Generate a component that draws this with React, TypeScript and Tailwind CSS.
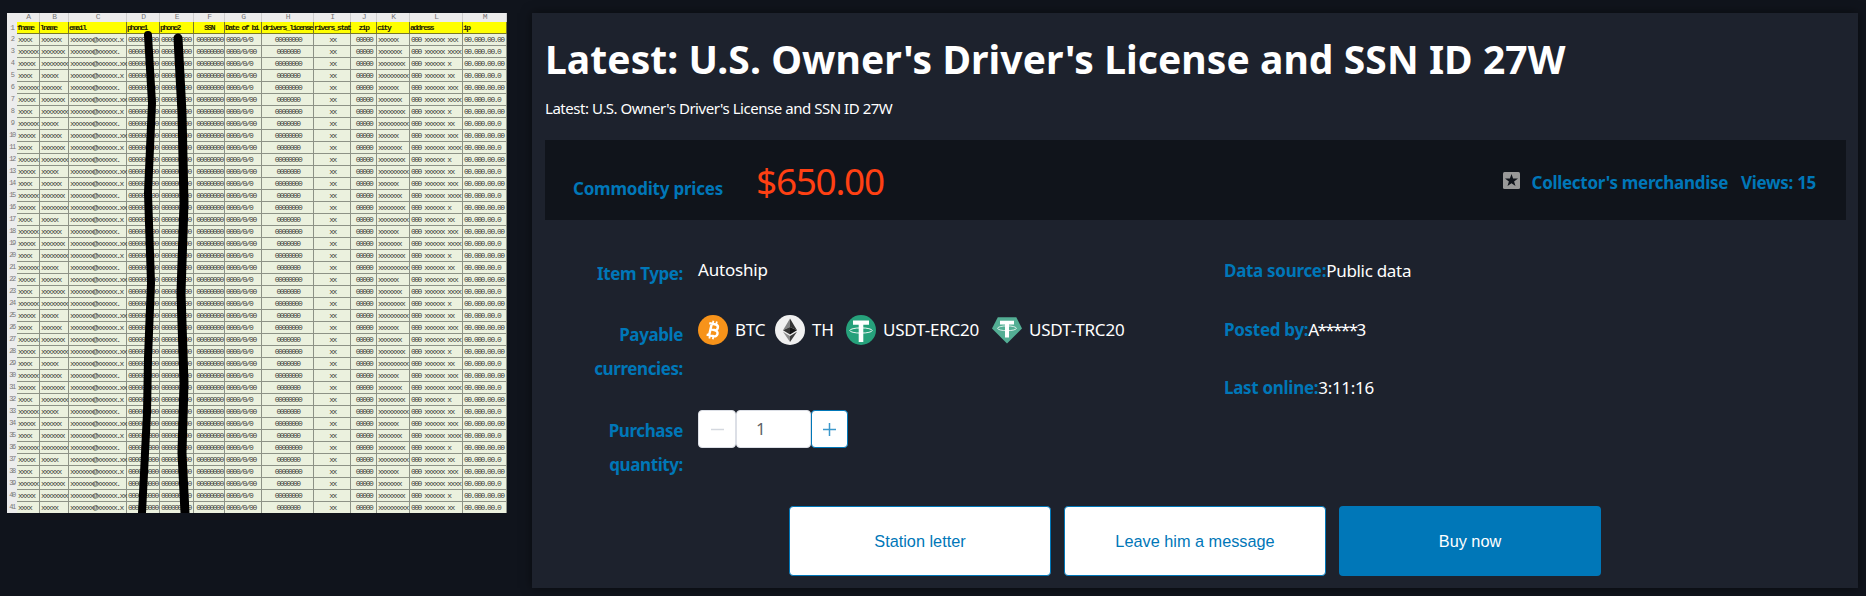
import type { ReactNode } from "react";

const columns = [
  { letter: "A", name: "fname", mask: "xxxxxx", vary: 3, width: "w-[23px]", align: "text-left" },
  { letter: "B", name: "lname", mask: "xxxxxxxx", vary: 4, width: "w-[29px]", align: "text-left" },
  { letter: "C", name: "email", mask: "xxxxxxx@xxxxxx.xx", vary: 3, width: "w-[58px]", align: "text-left" },
  { letter: "D", name: "phone1", mask: "000000000", vary: 1, width: "w-[33px]", align: "text-left" },
  { letter: "E", name: "phone2", mask: "000000000", vary: 1, width: "w-[34px]", align: "text-left" },
  { letter: "F", name: "SSN", mask: "00000000", vary: 1, width: "w-[31px]", align: "text-center" },
  { letter: "G", name: "Date of bi", mask: "0000/0/00", vary: 2, width: "w-[37px]", align: "text-left" },
  { letter: "H", name: "drivers_license", mask: "00000000", vary: 2, width: "w-[52px]", align: "text-center" },
  { letter: "I", name: "rivers_stat", mask: "xx", vary: 1, width: "w-[37px]", align: "text-center" },
  { letter: "J", name: "zip", mask: "00000", vary: 1, width: "w-[26px]", align: "text-center" },
  { letter: "K", name: "city", mask: "xxxxxxxxx", vary: 4, width: "w-[33px]", align: "text-left" },
  { letter: "L", name: "address", mask: "000 xxxxxx xxxx", vary: 4, width: "w-[53px]", align: "text-left" },
  { letter: "M", name: "ip", mask: "00.000.00.00", vary: 2, width: "w-[44px]", align: "text-left" },
];

const rows = Array.from({ length: 40 }, (_, i) => i + 2);

const maskFor = (mask: string, vary: number, row: number) =>
  mask.slice(0, mask.length - ((row * 7 + mask.length) % vary));

const SheetPreview = () => (
  <div className="relative h-[500px] w-[500px] shrink-0 overflow-hidden bg-[#ebf1de] font-['Liberation_Mono',monospace] text-[8px] tracking-[-1.5px] text-[#3f433b]">
    <div className="flex h-[9px] bg-[#ececec] leading-[7px] text-[#777]">
      <span className="w-[10px]" />
      {columns.map((col) => (
        <span key={col.letter} className={`${col.width} shrink-0 border-r border-[#cfcfcf] text-center`}>
          {col.letter}
        </span>
      ))}
    </div>
    <div className="flex h-[12px] bg-[#ffff00] leading-[12px] text-[#222200]">
      <span className="w-[10px] bg-[#ececec] text-center text-[#777]">1</span>
      {columns.map((col) => (
        <span
          key={col.letter}
          className={`${col.width} ${col.align} shrink-0 border-r border-b border-[#77772a] font-bold whitespace-nowrap`}
        >
          {col.name}
        </span>
      ))}
    </div>
    {rows.map((row) => (
      <div key={row} className="flex h-[12px] leading-[11px]">
        <span className="w-[10px] bg-[#ececec] text-center text-[7px] text-[#777]">{row}</span>
        {columns.map((col) => (
          <span
            key={col.letter}
            className={`${col.width} ${col.align} shrink-0 border-r border-b border-[#8d9286] pl-px whitespace-nowrap`}
          >
            {maskFor(col.mask, col.vary, row)}
          </span>
        ))}
      </div>
    ))}
    <svg className="absolute inset-0" width="500" height="500" viewBox="0 0 500 500" fill="none" stroke="#000" strokeLinecap="round">
      <path d="M141 22L145 90L141 180L144 270L141 345L140 400L135 500" strokeWidth="8" />
      <path d="M171 25L175 100L177 190L174 280L177 370L175 440L178 500" strokeWidth="9" />
    </svg>
  </div>
);

const BtcIcon = () => (
  <svg width="30" height="30" viewBox="0 0 32 32">
    <circle cx="16" cy="16" r="16" fill="#f7931a" />
    <g transform="rotate(13 16 16)" fill="none" stroke="#fff" strokeWidth="2.6">
      <path d="M10.5 9.7H17.5a3 3 0 0 1 0 6H13M13 15.7h5.3a3.3 3.3 0 0 1 0 6.6H10.5M13.2 9.7v12.6" />
      <path d="M14.2 6.3v3.4M18 6.3v3.4M14.2 22.3v3.4M18 22.3v3.4" strokeWidth="1.9" />
    </g>
  </svg>
);

const EthIcon = () => (
  <svg width="30" height="30" viewBox="0 0 30 30">
    <circle cx="15" cy="15" r="15" fill="#f0f0f0" />
    <path d="M15 3.5L8 15.2L15 12z" fill="#828384" />
    <path d="M15 3.5L22 15.2L15 12z" fill="#343434" />
    <path d="M15 12L8 15.2L15 19.4z" fill="#343434" />
    <path d="M15 12L22 15.2L15 19.4z" fill="#131313" />
    <path d="M8 16.8L15 21v6z" fill="#8c8c8c" />
    <path d="M22 16.8L15 21v6z" fill="#3c3c3b" />
  </svg>
);

const UsdtErcIcon = () => (
  <svg width="30" height="30" viewBox="0 0 30 30">
    <circle cx="15" cy="15" r="15" fill="#26a17b" />
    <path d="M7 5.5H23V9.8H17.3V27H12.7V9.8H7z" fill="#fff" />
    <ellipse cx="15" cy="15.5" rx="11.2" ry="2.6" fill="none" stroke="#fff" strokeWidth="0.9" />
  </svg>
);

const UsdtTrcIcon = () => (
  <svg width="30" height="30" viewBox="0 0 30 30">
    <path d="M5.8 2.3H24.3L30 13.5L15 28.5L0 13.5z" fill="#53ae94" />
    <path d="M8 5.8H22V9.6H17V22.5H13V9.6H8z" fill="#fff" />
    <ellipse cx="15" cy="13.3" rx="9.4" ry="2.4" fill="none" stroke="#fff" strokeWidth="0.8" />
  </svg>
);

const currencies = [
  { label: "BTC", icon: <BtcIcon />, width: "w-[77px]" },
  { label: "TH", icon: <EthIcon />, width: "w-[71px]" },
  { label: "USDT-ERC20", icon: <UsdtErcIcon />, width: "w-[146px]" },
  { label: "USDT-TRC20", icon: <UsdtTrcIcon />, width: "w-[146px]" },
];

const details = [
  { label: "Data source:", value: "Public data", tracking: "tracking-[-0.3px]" },
  { label: "Posted by:", value: "A*****3", tracking: "tracking-[-1.6px]" },
  { label: "Last online:", value: "3:11:16", tracking: "tracking-[-0.3px]" },
];

const Label = ({ children }: { children: ReactNode }) => (
  <div className="w-[110px] shrink-0 pr-[15px] text-right text-[17px] leading-[34px] font-bold tracking-[-0.4px] text-[#0077b8]">
    {children}
  </div>
);

export default function App() {
  return (
    <div className="flex h-[596px] w-[1866px] overflow-hidden bg-[#10141c] pt-[13px] pl-[7px] font-['Noto_Sans','Open_Sans',sans-serif] text-white">
      <SheetPreview />
      <main className="ml-[25px] h-[575px] w-[1326px] bg-[#1d222d] px-[13px] shadow-[0_0_10px_rgba(0,0,0,0.5)]">
        <h1 className="h-[80px] pt-[18px] text-[39px] leading-[56px] font-bold tracking-[0.07px] whitespace-nowrap">
          Latest: U.S. Owner's Driver's License and SSN ID 27W
        </h1>
        <p className="h-[47px] pt-[3px] text-[15px] leading-[24px] tracking-[-0.46px] whitespace-nowrap">
          Latest: U.S. Owner's Driver's License and SSN ID 27W
        </p>

        <section className="flex h-[80px] w-[1301px] items-center justify-between bg-[#10141b] pr-[30px] pl-[28px] text-[17px] font-bold text-[#0077b8]">
          <div className="flex items-baseline gap-[33px] pt-[2px]">
            <span className="tracking-[-0.22px]">Commodity prices</span>
            <span className="text-[37px] leading-[50px] font-normal tracking-[-1.3px] text-[#ff4013]">$650.00</span>
          </div>
          <div className="flex items-center pt-[5px] tracking-[-0.3px]">
            <svg className="mt-[-4px] mr-[12px]" width="17" height="17" viewBox="0 0 17 17">
              <rect width="17" height="17" rx="1.5" fill="#999" />
              <path d="M8.5 2L10.1 6.5H15L11.1 9.4L12.5 14L8.5 11.3L4.5 14L5.9 9.4L2 6.5H6.9z" fill="#10141b" />
            </svg>
            <span className="mr-[13px]">Collector's merchandise</span>
            <span>Views: 15</span>
          </div>
        </section>

        <section className="flex h-[273px] pt-[37px]">
          <div className="w-[651px] pl-[43px] text-[17px] tracking-[-0.2px]">
            <div className="flex h-[61px]">
              <Label>Item Type:</Label>
              <span className="leading-[26px]">Autoship</span>
            </div>
            <div className="flex h-[96px]">
              <Label>Payable currencies:</Label>
              <div className="-mt-[3px] flex h-[30px] items-center">
                {currencies.map((currency) => (
                  <div key={currency.label} className={`${currency.width} flex shrink-0 items-center gap-[7px] whitespace-nowrap`}>
                    {currency.icon}
                    <span>{currency.label}</span>
                  </div>
                ))}
              </div>
            </div>
            <div className="flex">
              <Label>Purchase quantity:</Label>
              <div className="-mt-[4px] flex h-[38px] text-[#606266]">
                <button className="flex w-[38px] items-center justify-center rounded border border-[#dcdfe6] bg-white">
                  <svg width="13" height="13" viewBox="0 0 13 13" stroke="#d4d8df" strokeWidth="1.5">
                    <path d="M0 6.5h13" />
                  </svg>
                </button>
                <span className="w-[75px] rounded border border-[#dcdfe6] bg-white pl-[19px] leading-[36px]">1</span>
                <button className="flex w-[37px] items-center justify-center rounded border border-[#0077b8] bg-white">
                  <svg width="13" height="13" viewBox="0 0 13 13" stroke="#3c98cb" strokeWidth="1.5">
                    <path d="M0 6.5h13M6.5 0v13" />
                  </svg>
                </button>
              </div>
            </div>
          </div>
          <div className="pl-[28px] text-[17px] leading-[28px]">
            {details.map((item) => (
              <div key={item.label} className="h-[58.5px]">
                <span className="font-bold tracking-[-0.3px] text-[#0077b8]">{item.label}</span>
                <span className={item.tracking}>{item.value}</span>
              </div>
            ))}
          </div>
        </section>

        <div className="mt-[13px] flex gap-[13px] pl-[244px] font-['Liberation_Sans',Arial,sans-serif] text-[16.3px]">
          <button className="h-[70px] w-[262px] rounded border border-[#0077b8] bg-white text-[#0077b8]">Station letter</button>
          <button className="h-[70px] w-[262px] rounded border border-[#0077b8] bg-white text-[#0077b8]">Leave him a message</button>
          <button className="h-[70px] w-[262px] rounded bg-[#0077b8] text-white">Buy now</button>
        </div>
      </main>
    </div>
  );
}
